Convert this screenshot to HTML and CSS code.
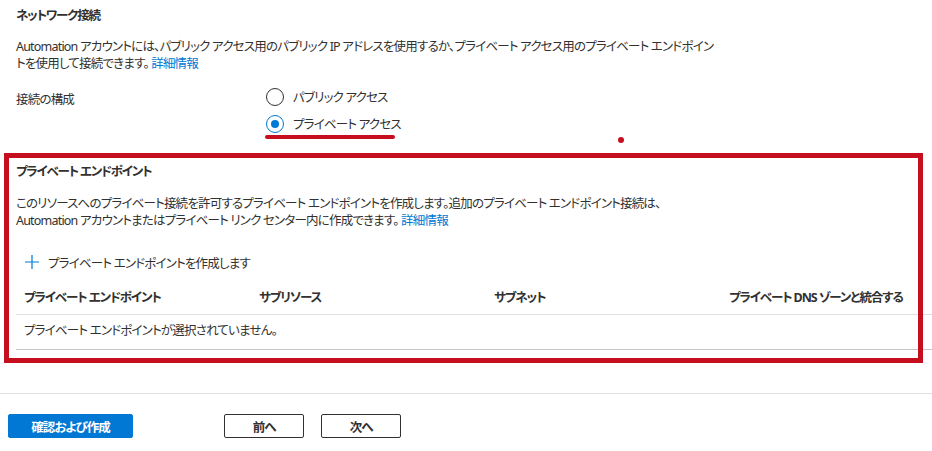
FILE: index.html
```html
<!DOCTYPE html>
<html lang="ja">
<head>
    <meta charset="UTF-8">
    <meta name="viewport" content="width=device-width, initial-scale=1.0">
    <title>ネットワーク接続</title>
    <link rel="stylesheet" href="styles.css">
</head>
<body>
    <div class="page">
        <h2 class="title">ネットワーク接続</h2>
        <p class="desc">Automation アカウントには、パブリック アクセス用のパブリック IP アドレスを使用するか、プライベート アクセス用のプライベート エンドポイントを使用して接続できます。 <a href="#">詳細情報</a></p>

        <div class="config">
            <div class="config-label">接続の構成</div>
            <div class="radios">
                <label class="option">
                    <span class="radio"></span>
                    <span>パブリック アクセス</span>
                </label>
                <label class="option selected">
                    <span class="radio"></span>
                    <span>プライベート アクセス</span>
                </label>
            </div>
            <span class="mark-dot"></span>
        </div>
    </div>

    <section class="endpoints">
        <h3 class="title">プライベート エンドポイント</h3>
        <p class="desc">このリソースへのプライベート接続を許可するプライベート エンドポイントを作成します。追加のプライベート エンドポイント接続は、Automation アカウントまたはプライベート リンク センター内に作成できます。 <a href="#">詳細情報</a></p>

        <div class="add">
            <svg width="16" height="16" viewBox="0 0 16 16">
                <path d="M8 1v14M1 8h14" stroke="#0078d4" stroke-width="1.2" fill="none"/>
            </svg>
            <span>プライベート エンドポイントを作成します</span>
        </div>

        <div class="grid-row head">
            <div>プライベート エンドポイント</div>
            <div>サブリソース</div>
            <div>サブネット</div>
            <div>プライベート DNS ゾーンと統合する</div>
        </div>
        <div class="grid-row empty">
            <div>プライベート エンドポイントが選択されていません。</div>
        </div>
    </section>

    <div class="footer">
        <button class="btn primary">確認および作成</button>
        <button class="btn prev">前へ</button>
        <button class="btn next">次へ</button>
    </div>
</body>
</html>
```

FILE: styles.css
```css
body {
    margin: 0;
    font-family: "Noto Sans", "Noto Sans CJK JP", sans-serif;
    font-size: 12.5px;
    letter-spacing: -0.8px;
    font-feature-settings: "palt";
    color: #323130;
    background: #fff;
}
.page {
    padding: 7px 16px 0;
}
.title {
    margin: 0;
    font-size: 12.5px;
    line-height: 18px;
    font-weight: 700;
    letter-spacing: -1.2px;
}
.desc {
    margin: 13px 0 0;
    line-height: 17px;
    max-width: 705px;
}
.desc a {
    color: #0078d4;
    text-decoration: none;
}
.config {
    position: relative;
    display: flex;
    margin-top: 11px;
}
.config-label {
    width: 250px;
    padding-top: 8px;
    line-height: 18px;
}
.radios {
    display: flex;
    flex-direction: column;
}
.option {
    position: relative;
    display: flex;
    align-items: center;
    gap: 9px;
    height: 27px;
}
.radio {
    width: 18px;
    height: 18px;
    box-sizing: border-box;
    border: 1px solid #323130;
    border-radius: 50%;
    display: flex;
    align-items: center;
    justify-content: center;
}
.selected .radio {
    border-color: #0078d4;
}
.selected .radio::after {
    content: "";
    width: 8px;
    height: 8px;
    border-radius: 50%;
    background: #0078d4;
}
/* annotation marks */
.selected::after {
    content: "";
    position: absolute;
    left: -1px;
    top: 25px;
    width: 130px;
    height: 4px;
    border-radius: 2px;
    background: #c50f1f;
}
.mark-dot {
    position: absolute;
    left: 602px;
    top: 54px;
    width: 6px;
    height: 6px;
    border-radius: 50%;
    background: #c50f1f;
}
.endpoints {
    position: relative;
    margin: 16px 0 0 4px;
    padding: 10px 0 13px 12px;
}
.endpoints::after {
    content: "";
    position: absolute;
    left: 0;
    top: 0;
    right: 9px;
    bottom: 0;
    border: 5px solid #c50f1f;
    pointer-events: none;
}
.endpoints .desc {
    margin-top: 14px;
}
.add {
    display: flex;
    align-items: center;
    gap: 8px;
    height: 24px;
    margin-top: 21px;
    padding-left: 8px;
}
.grid-row {
    display: grid;
    grid-template-columns: 235px 235px 235px 1fr;
    box-sizing: border-box;
    border-bottom: 1px solid #e1dfdd;
    align-items: center;
}
.grid-row > div {
    padding: 0 8px;
    white-space: nowrap;
}
.head {
    margin-top: 4px;
    height: 37px;
    font-weight: 700;
    letter-spacing: -1.1px;
}
.empty {
    height: 35px;
    padding-bottom: 5px;
    border-bottom-color: #c8c6c4;
}
.footer {
    margin-top: 30px;
    border-top: 1px solid #e0e0e0;
    padding: 20px 8px 0;
    display: flex;
}
.btn {
    height: 24px;
    padding: 0;
    border: 1px solid #323130;
    border-radius: 2px;
    background: #fff;
    color: #323130;
    font-family: inherit;
    font-size: 12.5px;
    font-weight: 700;
    letter-spacing: -1px;
    font-feature-settings: "palt";
}
.primary {
    width: 125px;
    border-color: #0078d4;
    background: #0078d4;
    color: #fff;
}
.prev {
    width: 80px;
    margin-left: 91px;
}
.next {
    width: 80px;
    margin-left: 17px;
}
```
